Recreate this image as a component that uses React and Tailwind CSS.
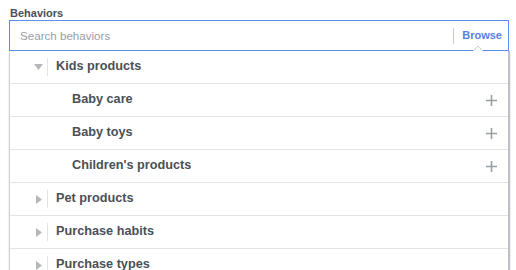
import React from "react";

const rows = [
    { label: "Kids products", level: 0, open: true },
    { label: "Baby care", level: 1 },
    { label: "Baby toys", level: 1 },
    { label: "Children's products", level: 1 },
    { label: "Pet products", level: 0 },
    { label: "Purchase habits", level: 0 },
    { label: "Purchase types", level: 0 },
];

function Caret({ open }) {
    return open ? (
        <svg width="9" height="6" viewBox="0 0 9 6" className="block">
            <path d="M0 0 L9 0 L4.5 6 Z" fill="#b4b7bc" />
        </svg>
    ) : (
        <svg width="6" height="9" viewBox="0 0 6 9" className="block">
            <path d="M0 0 L6 4.5 L0 9 Z" fill="#b4b7bc" />
        </svg>
    );
}

function Plus() {
    return (
        <svg width="11" height="11" viewBox="0 0 11 11" className="block">
            <path d="M5.5 0 V11 M0 5.5 H11" stroke="#9a9ea5" strokeWidth="1.6" />
        </svg>
    );
}

export default function App() {
    return (
        <div
            className="w-[516px] h-[270px] overflow-hidden bg-white"
            style={{ fontFamily: '"Liberation Sans", Arial, sans-serif' }}
        >
            <div className="pl-[10px] pt-[6px] h-[20px] text-[11px] leading-[14px] font-bold text-[#4b4f56]">
                Behaviors
            </div>

            <div className="ml-[9px] w-[500px] relative">
                {/* search field */}
                <div className="h-[31px] border border-[#5b8def] flex items-center pl-[10px] pr-[6px]">
                    <span className="flex-1 text-[11.6px] text-[#9a9ea5]">Search behaviors</span>
                    <span className="w-px h-[16px] bg-[#c2cde6] mr-[8px]"></span>
                    <span className="text-[11px] font-bold text-[#5a7fdc]">Browse</span>
                </div>
                <svg width="10" height="5" viewBox="0 0 10 5" className="absolute left-[464px] top-[26px]">
                    <path d="M0 5 L5 0 L10 5" fill="white" stroke="#c9ccd1" strokeWidth="1" />
                </svg>

                {/* dropdown */}
                <div className="w-[501px] border-l border-[#cfd2d6] border-r-2 border-r-[#bcc0c9] bg-white shadow-[0_2px_2px_rgba(0,0,0,0.15)]">
                    {rows.map((r) => (
                        <div
                            key={r.label}
                            className="h-[33px] border-b border-[#e3e4e7] flex items-center text-[12.7px] font-bold text-[#4b4f56]"
                        >
                            {r.level === 0 ? (
                                <>
                                    <span className="w-[37px] flex justify-end pr-[4px]">
                                        <span className={r.open ? "" : "mr-[1px]"}>
                                            <Caret open={r.open} />
                                        </span>
                                    </span>
                                    <span className="w-px h-[18px] bg-[#e3e4e7] mr-[8px]"></span>
                                    <span className="flex-1">{r.label}</span>
                                </>
                            ) : (
                                <>
                                    <span className="pl-[62px] flex-1">{r.label}</span>
                                    <span className="mr-[11px]">
                                        <Plus />
                                    </span>
                                </>
                            )}
                        </div>
                    ))}
                </div>
            </div>
        </div>
    );
}
